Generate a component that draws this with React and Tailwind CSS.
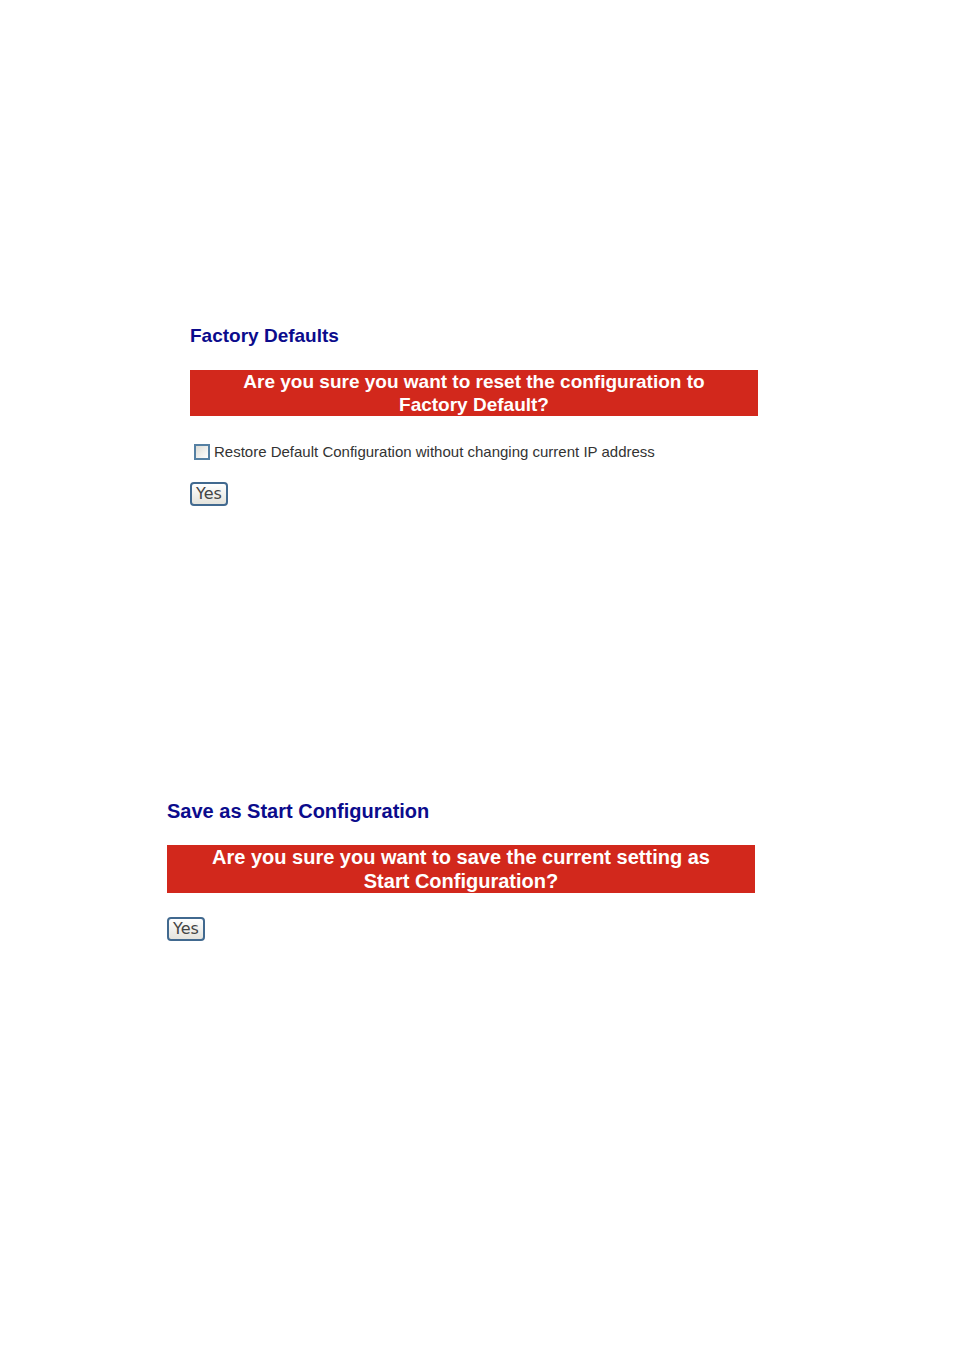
import { useState } from 'react';

const Title = ({ children }) => <h2 className="leading-6 text-[#0b0b8c]">{children}</h2>;

const Warning = ({ children }) => (
  <p className="mt-[22px] bg-[#d2281c] text-center text-white">{children}</p>
);

const YesButton = () => (
  <button
    type="submit"
    className="block h-6 rounded-[4px] border-2 border-[#41698f] bg-linear-to-b from-white to-[#e4e3dc] px-1 font-['DejaVu_Sans',sans-serif] text-base leading-5 font-normal text-[#444]"
  >
    Yes
  </button>
);

export default function App() {
  const [keepIp, setKeepIp] = useState(false);

  return (
    <main className="min-h-screen bg-white px-[167px] pt-[324px] font-['Liberation_Sans',Arial,sans-serif] font-bold">
      <form
        className="ml-[23px] max-w-[568px] text-[19px] leading-[23px]"
        onSubmit={(e) => e.preventDefault()}
      >
        <Title>Factory Defaults</Title>
        <Warning>
          Are you sure you want to reset the configuration to
          <br />
          Factory Default?
        </Warning>
        <label className="mt-6 ml-1 flex items-center gap-1 text-[15px] leading-6 font-normal text-[#333]">
          <input
            type="checkbox"
            checked={keepIp}
            onChange={(e) => setKeepIp(e.target.checked)}
            className="size-4 shrink-0 appearance-none border-2 border-[#5580a3] bg-linear-to-br from-[#dcdcd6] to-white checked:bg-[#5580a3] checked:bg-none"
          />
          Restore Default Configuration without changing current IP address
        </label>
        <div className="mt-[18px]">
          <YesButton />
        </div>
      </form>

      <form
        className="mt-[293px] max-w-[588px] text-[20px] leading-6"
        onSubmit={(e) => e.preventDefault()}
      >
        <Title>Save as Start Configuration</Title>
        <Warning>
          Are you sure you want to save the current setting as
          <br />
          Start Configuration?
        </Warning>
        <div className="mt-6">
          <YesButton />
        </div>
      </form>
    </main>
  );
}
